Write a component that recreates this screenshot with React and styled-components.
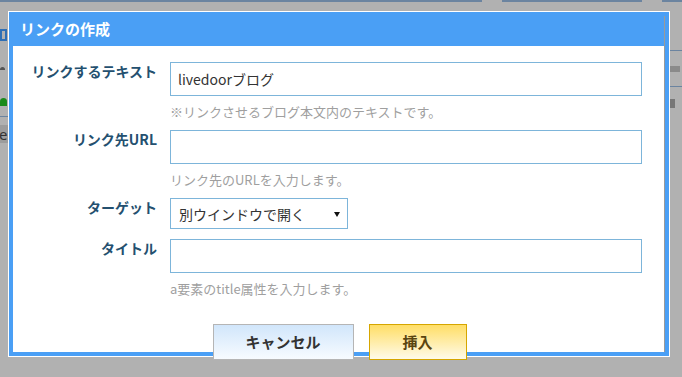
import React from "react";
import styled, { createGlobalStyle } from "styled-components";

const GlobalStyle = createGlobalStyle`
  html, body {
    margin: 0;
    padding: 0;
    background: #b1b1b1;
  }
  body {
    font-family: "Noto Sans CJK JP", "Noto Sans", sans-serif;
  }
`;

let Page = styled.div`
  position: relative;
  width: 682px;
  height: 377px;
  overflow: hidden;
  background: #b1b1b1;
`;

// the editor behind the dimmed overlay, only a few edges show
let TopEdge = styled.div`
  display: flex;
  gap: 20px;
  height: 2px;
  & > span {
    flex: 1;
    background: #6b84a0;
  }
`;

let LeftEdge = styled.div`
  position: absolute;
  left: 0;
  top: 20px;
  width: 8px;
  display: flex;
  flex-direction: column;
`;

let EdgeIcon = styled.div`
  width: ${p => p.w || 7}px;
  height: ${p => p.h || 10}px;
  margin-top: ${p => p.mt || 0}px;
  background: ${p => p.bg || "transparent"};
  border: ${p => p.line ? "2px solid " + p.line : "none"};
  border-radius: ${p => p.round || "0"};
  box-sizing: border-box;
`;

let EdgeRule = styled.div`
  height: 1px;
  margin-top: ${p => p.mt || 0}px;
  background: #6b84a0;
`;

let EdgeLetter = styled.div`
  height: 18px;
  background: #9c9c9c;
  color: #333;
  font-size: 15px;
  line-height: 18px;
  margin-top: 8px;
  text-indent: -1px;
  font-family: "Noto Sans", sans-serif;
`;

let RightEdge = styled.div`
  position: absolute;
  left: 670px;
  top: 50px;
  width: 12px;
  display: flex;
  flex-direction: column;
`;

let Dialog = styled.div`
  position: absolute;
  left: 8px;
  top: 11px;
  width: 662px;
  height: 346px;
  border: 1px solid #ffffff;
  box-sizing: border-box;
`;

let Frame = styled.div`
  height: 100%;
  border: 4px solid #4a9ff5;
  box-sizing: border-box;
`;

let Inner = styled.div`
  height: 100%;
  border-right: 1px solid #9a9a9a;
  display: flex;
  flex-direction: column;
`;

let TitleBar = styled.div`
  height: 30px;
  flex-shrink: 0;
  background: #4a9ff5;
  color: #ffffff;
  font-size: 15px;
  font-weight: bold;
  line-height: 26px;
  padding: 0 0 4px 7px;
  box-sizing: border-box;
`;

let Body = styled.div`
  flex: 1;
  min-height: 0;
  background: #ffffff;
  padding-top: 16px;
  box-sizing: border-box;
`;

let Row = styled.div`
  display: grid;
  grid-template-columns: 144px 472px;
  column-gap: 13px;
  margin-bottom: ${p => p.gap || 0}px;
`;

let Label = styled.div`
  text-align: right;
  font-size: 14px;
  font-weight: bold;
  line-height: 18px;
  color: #24506f;
`;

let Input = styled.input`
  display: block;
  width: 100%;
  height: 34px;
  border: 1px solid #7db5da;
  padding: 0 7px;
  box-sizing: border-box;
  font-family: inherit;
  font-size: 14px;
  color: #333;
  outline: none;
`;

let Help = styled.div`
  height: 34px;
  padding-top: 7px;
  box-sizing: border-box;
  font-size: 13px;
  line-height: 18px;
  color: #9f9f9f;
`;

let SelectBox = styled.div`
  width: 178px;
  height: 31px;
  border: 1px solid #7db5da;
  box-sizing: border-box;
  display: flex;
  align-items: center;
  justify-content: space-between;
  padding: 1px 7px 0 8px;
  font-size: 14px;
  color: #333;
`;

let Footer = styled.div`
  display: flex;
  justify-content: center;
  gap: 15px;
  padding-top: 17px;
  padding-left: 2px;
`;

let Button = styled.div`
  position: relative;
  flex-shrink: 0;
  width: ${p => p.w}px;
  height: 36px;
  box-sizing: border-box;
  display: flex;
  align-items: center;
  justify-content: center;
  font-size: 15px;
  font-weight: bold;
  padding-bottom: 2px;
  border: 1px solid ${p => p.primary ? "#d6a600" : "#b5b5b5"};
  background: ${p => p.primary
    ? "linear-gradient(#ffde66, #fffbea)"
    : "linear-gradient(#d1e6fb, #f7fbff)"};
  color: ${p => p.primary ? "#5a4510" : "#333333"};
`;

function Arrow() {
  return (
    <svg width="6" height="5" viewBox="0 0 6 5">
      <path d="M0 0 H6 L3 5 Z" fill="#111" />
    </svg>
  );
}

export default function App() {
  return (
    <Page>
      <GlobalStyle />
      <TopEdge>
        <span style={{ flex: 24 }} />
        <span style={{ flex: 7 }} />
        <span style={{ flex: 1 }} />
      </TopEdge>
      <LeftEdge>
        <EdgeIcon line="#2f6fb5" mt={9} h={12} />
        <EdgeIcon bg="#555" w={5} h={3} mt={26} round="3px 3px 0 0" />
        <EdgeIcon bg="#1b8a1b" h={8} mt={28} round="6px 6px 0 0" />
        <EdgeRule mt={10} />
        <EdgeLetter>e</EdgeLetter>
      </LeftEdge>
      <RightEdge>
        <EdgeRule />
        <EdgeIcon bg="#8a8a8a" w={10} h={6} mt={15} />
        <EdgeRule mt={14} />
        <EdgeIcon bg="#777" w={5} h={9} mt={12} />
      </RightEdge>

      <Dialog>
        <Frame>
          <Inner>
            <TitleBar>リンクの作成</TitleBar>
            <Body>
              <Row>
                <Label>リンクするテキスト</Label>
                <div>
                  <Input defaultValue="livedoorブログ" />
                  <Help>※リンクさせるブログ本文内のテキストです。</Help>
                </div>
              </Row>
              <Row>
                <Label>リンク先URL</Label>
                <div>
                  <Input />
                  <Help>リンク先のURLを入力します。</Help>
                </div>
              </Row>
              <Row gap={10}>
                <Label>ターゲット</Label>
                <SelectBox>
                  <span>別ウインドウで開く</span>
                  <Arrow />
                </SelectBox>
              </Row>
              <Row>
                <Label>タイトル</Label>
                <div>
                  <Input />
                  <Help>a要素のtitle属性を入力します。</Help>
                </div>
              </Row>
              <Footer>
                <Button w={141}>キャンセル</Button>
                <Button w={98} primary>挿入</Button>
              </Footer>
            </Body>
          </Inner>
        </Frame>
      </Dialog>
    </Page>
  );
}
